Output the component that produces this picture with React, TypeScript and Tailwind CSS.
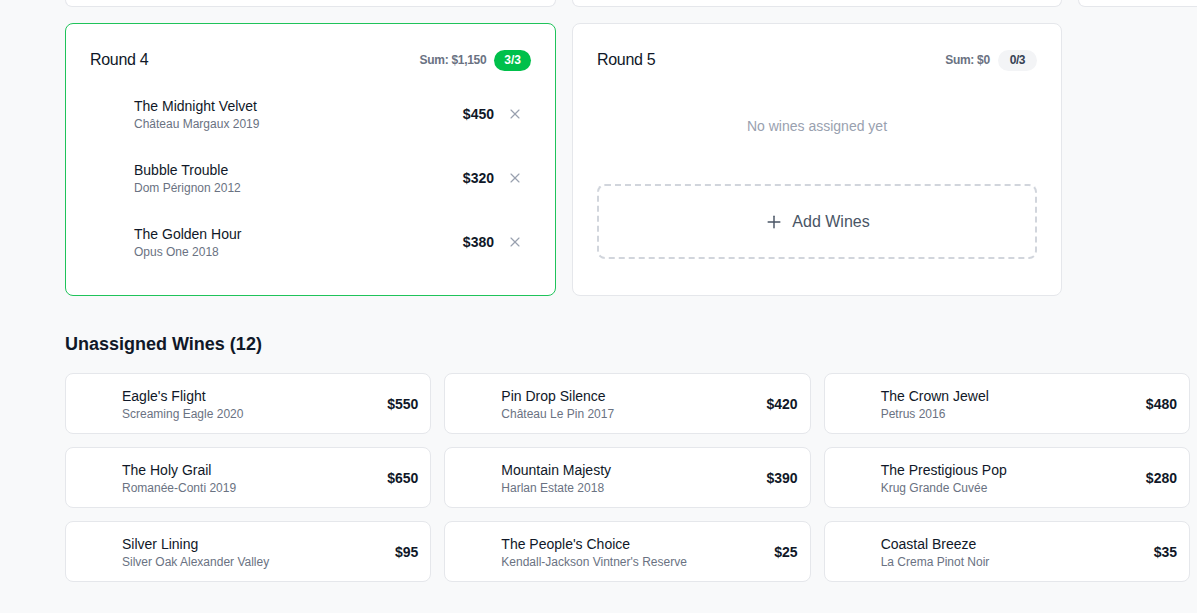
import React from "react";
import { X, Plus } from "lucide-react";

type Wine = { name: string; sub: string; price: string };

const round4: Wine[] = [
  { name: "The Midnight Velvet", sub: "Château Margaux 2019", price: "$450" },
  { name: "Bubble Trouble", sub: "Dom Pérignon 2012", price: "$320" },
  { name: "The Golden Hour", sub: "Opus One 2018", price: "$380" },
];

const unassigned: Wine[] = [
  { name: "Eagle's Flight", sub: "Screaming Eagle 2020", price: "$550" },
  { name: "Pin Drop Silence", sub: "Château Le Pin 2017", price: "$420" },
  { name: "The Crown Jewel", sub: "Petrus 2016", price: "$480" },
  { name: "The Holy Grail", sub: "Romanée-Conti 2019", price: "$650" },
  { name: "Mountain Majesty", sub: "Harlan Estate 2018", price: "$390" },
  { name: "The Prestigious Pop", sub: "Krug Grande Cuvée", price: "$280" },
  { name: "Silver Lining", sub: "Silver Oak Alexander Valley", price: "$95" },
  { name: "The People's Choice", sub: "Kendall-Jackson Vintner's Reserve", price: "$25" },
  { name: "Coastal Breeze", sub: "La Crema Pinot Noir", price: "$35" },
];

function RoundRow({ w }: { w: Wine }) {
  return (
    <div className="flex items-center h-[60px] px-3">
      <div className="w-8 shrink-0" />
      <div className="flex-1 min-w-0">
        <div className="text-sm leading-5 text-gray-900">{w.name}</div>
        <div className="text-xs leading-4 text-gray-500">{w.sub}</div>
      </div>
      <div className="text-sm font-bold text-gray-900">{w.price}</div>
      <button className="ml-[13px] text-gray-400 flex items-center justify-center mr-[-4px]">
        <X size={16} strokeWidth={1.75} />
      </button>
    </div>
  );
}

export default function App() {
  return (
    <div
      className="min-h-[613px] w-[1197px] overflow-hidden bg-[#f8f9fa] pl-[65px]"
      style={{ fontFamily: '"Liberation Sans", Arial, sans-serif' }}
    >
      {/* previous row (cut off at top) */}
      <div className="flex gap-4 w-[1600px]">
        <div className="w-[491px] h-[7px] bg-white border border-t-0 border-gray-200 rounded-b-lg" />
        <div className="w-[490px] h-[7px] bg-white border border-t-0 border-gray-200 rounded-b-lg" />
        <div className="w-[490px] h-[7px] bg-white border border-t-0 border-gray-200 rounded-b-lg" />
      </div>

      <div className="flex gap-4 mt-4 w-[1600px] items-stretch">
        {/* Round 4 */}
        <div className="w-[491px] bg-white border border-[#1fc35a] rounded-lg p-6 pb-[23px]">
          <div className="flex items-center justify-between h-6">
            <div className="text-base text-gray-900 tracking-[-0.3px]">Round 4</div>
            <div className="flex items-center gap-2">
              <span className="text-xs font-semibold text-gray-500 tracking-[-0.3px]">Sum: $1,150</span>
              <span className="h-[21px] px-[10px] rounded-full bg-[#00c04b] text-white text-xs font-bold flex items-center">3/3</span>
            </div>
          </div>
          <div className="mt-3 flex flex-col gap-1">
            {round4.map((w) => (
              <RoundRow key={w.name} w={w} />
            ))}
          </div>
        </div>

        {/* Round 5 */}
        <div className="w-[490px] bg-white border border-gray-200 rounded-lg p-6">
          <div className="flex items-center justify-between h-6">
            <div className="text-base text-gray-900 tracking-[-0.3px]">Round 5</div>
            <div className="flex items-center gap-2">
              <span className="text-xs font-semibold text-gray-500 tracking-[-0.3px]">Sum: $0</span>
              <span className="h-[21px] px-3 rounded-full bg-gray-100 text-gray-700 text-xs font-bold flex items-center tracking-[-0.5px]">0/3</span>
            </div>
          </div>
          <div className="mt-3 py-8 text-center text-sm leading-5 text-gray-400">No wines assigned yet</div>
          <div className="mt-4 h-[75px] border-2 border-dashed border-gray-300 rounded-lg flex items-center justify-center gap-2 text-gray-600">
            <Plus size={20} strokeWidth={1.75} />
            <span className="text-base">Add Wines</span>
          </div>
        </div>
      </div>

      <h2 className="mt-[34px] text-lg leading-7 font-bold text-gray-900">Unassigned Wines (12)</h2>

      <div className="mt-[15px] grid grid-cols-3 gap-[13px] w-[1125px] pb-8">
        {unassigned.map((w) => (
          <div key={w.name} className="h-[61px] bg-white border border-gray-200 rounded-lg px-3 flex items-center gap-3">
            <div className="w-8 shrink-0" />
            <div className="flex-1 min-w-0">
              <div className="text-sm leading-5 text-gray-900">{w.name}</div>
              <div className="text-xs leading-4 text-gray-500">{w.sub}</div>
            </div>
            <div className="text-sm font-bold text-gray-900">{w.price}</div>
          </div>
        ))}
      </div>
    </div>
  );
}
